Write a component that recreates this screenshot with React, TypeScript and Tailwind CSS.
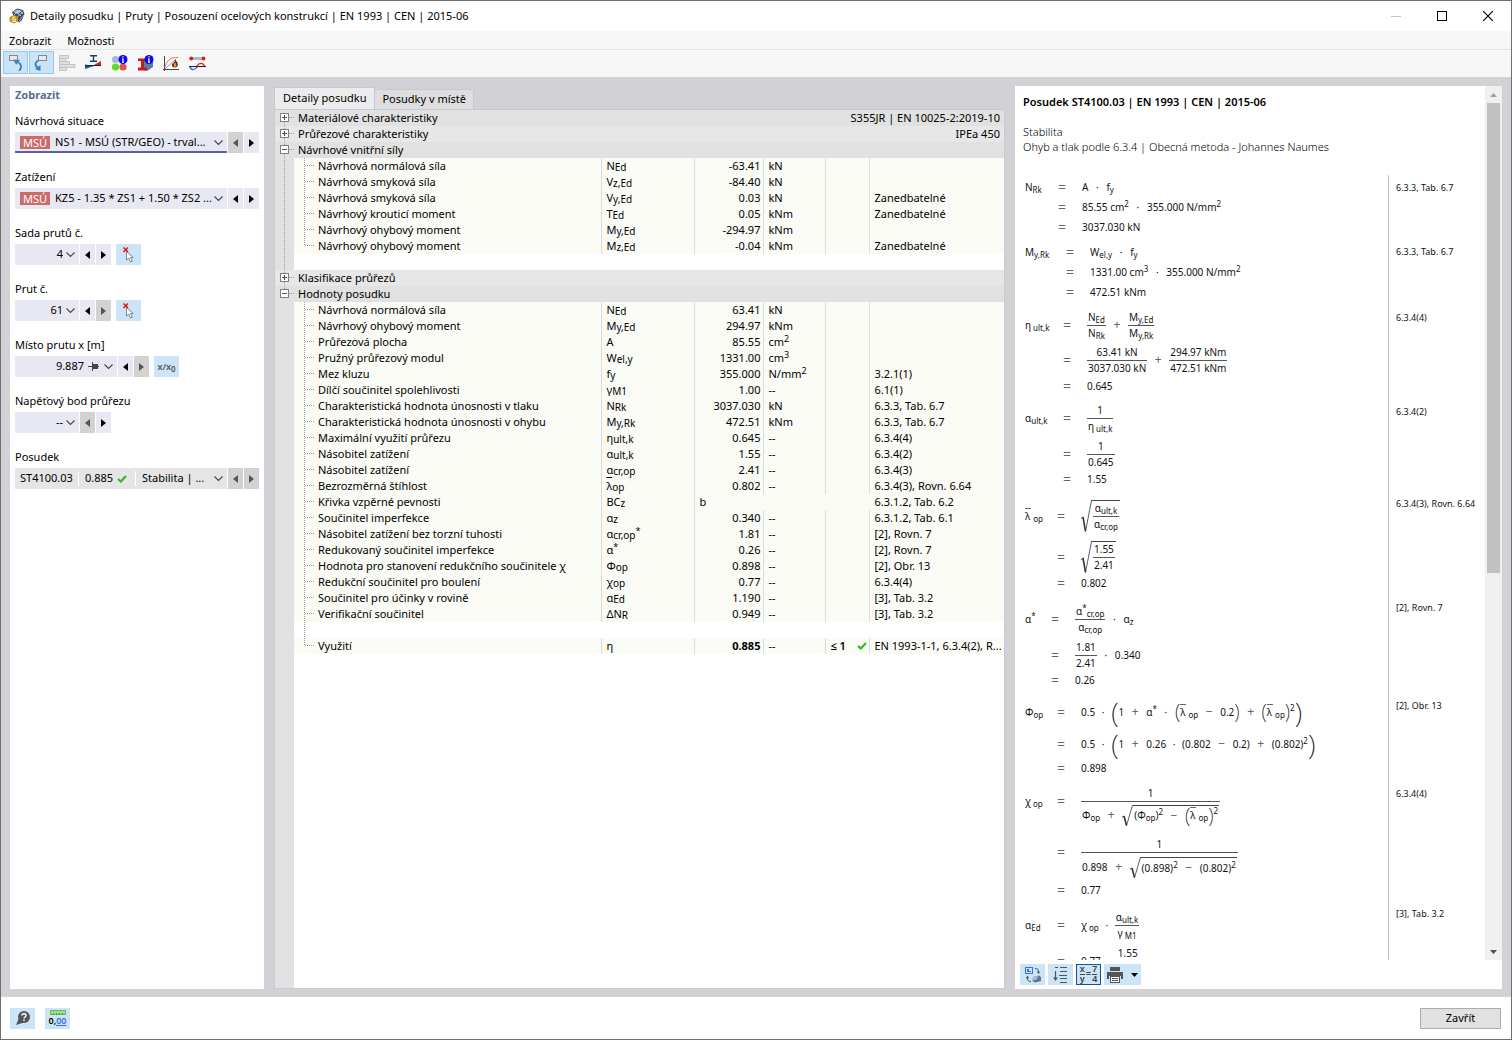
import type { ReactNode } from 'react';
import clsx from 'clsx';

/* ---------- small shared pieces ---------- */

function Sub({ children }: { children: ReactNode }) {
  return <sub className="text-[10px] leading-none bottom-[-1px]">{children}</sub>;
}

function Arrow({ dir }: { dir: 'left' | 'right' }) {
  return (
    <svg width="5" height="8" viewBox="0 0 5 8" aria-hidden="true">
      <path d={dir === 'left' ? 'M5 0V8L0 4Z' : 'M0 0V8L5 4Z'} fill="currentColor" />
    </svg>
  );
}

function Chevron() {
  return (
    <svg width="9" height="6" viewBox="0 0 9 6" fill="none" className="shrink-0" aria-hidden="true">
      <path d="M0.5 0.5L4.5 4.5L8.5 0.5" stroke="#444" strokeWidth="1.1" />
    </svg>
  );
}

function Check() {
  return (
    <svg width="10" height="8" viewBox="0 0 10 8" fill="none" aria-hidden="true">
      <path d="M1 4L3.8 6.5L9 1" stroke="#34b52c" strokeWidth="2.2" />
    </svg>
  );
}

/* ---------- left panel ---------- */

function Stepper({ name, prev = true, next = true }: { name: string; prev?: boolean; next?: boolean }) {
  const style = 'w-[15px] h-[21px] flex items-center justify-center';
  const on = 'bg-[#e8e8f2] text-black';
  const off = 'bg-[#d2d2d2] text-[#555]';
  return (
    <>
      <button type="button" disabled={!prev} aria-label={`${name} předchozí`} className={clsx(style, prev ? on : off)}>
        <Arrow dir="left" />
      </button>
      <button type="button" disabled={!next} aria-label={`${name} další`} className={clsx(style, next ? on : off)}>
        <Arrow dir="right" />
      </button>
    </>
  );
}

type FieldProps = {
  id: string;
  label: string;
  value: string;
  box: string;
  lead?: ReactNode;
  tail?: ReactNode;
  right?: boolean;
  prev?: boolean;
  next?: boolean;
  extra?: ReactNode;
};

function Field({ id, label, value, box, lead, tail, right, prev, next, extra }: FieldProps) {
  return (
    <div>
      <label htmlFor={id} className="flex items-center h-[22px]">
        {label}
      </label>
      <div className="flex gap-px">
        <div className={clsx('flex items-center h-[21px] pr-1', box)}>
          {lead}
          <select
            id={id}
            className={clsx('appearance-none flex-1 min-w-0 bg-transparent outline-none', right && 'text-right')}
          >
            <option>{value}</option>
          </select>
          {tail}
          <Chevron />
        </div>
        <Stepper name={label} prev={prev} next={next} />
        {extra}
      </div>
    </div>
  );
}

function Badge() {
  return <span className="bg-[#cd6a6a] text-white leading-[13px] px-[3px] ml-[5px] mr-[5px]">MSÚ</span>;
}

function PickButton({ label }: { label: string }) {
  return (
    <button type="button" aria-label={label} className="w-[25px] h-[21px] ml-1 bg-[#cce4f7] flex items-center justify-center">
      <svg width="14" height="16" viewBox="0 0 14 16" fill="none">
        <path d="M1.5 0.5L6 5M6 0.5L1.5 5" stroke="#e01818" strokeWidth="1.5" />
        <path d="M4.5 4.5V13L6.7 11L8.4 15L10.2 14.2L8.5 10.4H11.2Z" fill="#fff" stroke="#777" strokeWidth="0.9" />
      </svg>
    </button>
  );
}

function SidePanel() {
  return (
    <section className="w-[254px] shrink-0 bg-white px-[5px]">
      <h2 className="h-[18px] mb-[6px] leading-[18px] font-bold text-[#5c6b8f]">Zobrazit</h2>
      <div className="flex flex-col gap-[13px]">
        <Field
          id="situace"
          label="Návrhová situace"
          value="NS1 - MSÚ (STR/GEO) - trval..."
          box="w-[212px] bg-[#e8e8f2] shadow-[inset_0_-2px_0_#5e5fa8]"
          lead={<Badge />}
          prev={false}
        />
        <Field
          id="zatizeni"
          label="Zatížení"
          value="KZ5 - 1.35 * ZS1 + 1.50 * ZS2 ..."
          box="w-[212px] bg-[#e8e8f2]"
          lead={<Badge />}
        />
        <Field
          id="sada"
          label="Sada prutů č."
          value="4"
          box="w-[64px] bg-[#e8e8f2]"
          right
          tail={<span className="w-[3px]" />}
          extra={<PickButton label="Vybrat sadu prutů" />}
        />
        <Field
          id="prut"
          label="Prut č."
          value="61"
          box="w-[64px] bg-[#e8e8f2]"
          right
          next={false}
          tail={<span className="w-[3px]" />}
          extra={<PickButton label="Vybrat prut" />}
        />
        <Field
          id="misto"
          label="Místo prutu x [m]"
          value="9.887"
          box="w-[102px] bg-[#e8e8f2]"
          right
          next={false}
          tail={
            <svg width="11" height="9" viewBox="0 0 11 9" className="ml-1 mr-[5px]" aria-hidden="true">
              <path d="M0 4H4V0H5V2H10V4H11V5H10V7H5V9H4V5H0Z" fill="#444" />
            </svg>
          }
          extra={
            <button type="button" className="w-[25px] h-[21px] ml-1 bg-[#cce4f7] text-[9px] leading-[20px] font-semibold text-[#555]">
              x/x<sub className="text-[8px]">0</sub>
            </button>
          }
        />
        <Field
          id="bod"
          label="Napěťový bod průřezu"
          value="--"
          box="w-[64px] bg-[#e8e8f2]"
          right
          prev={false}
          tail={<span className="w-[3px]" />}
        />
        <Field
          id="posudek"
          label="Posudek"
          value="Stabilita | ..."
          box="w-[212px] bg-[#e5e5e5]"
          prev={false}
          next={false}
          lead={
            <>
              <span className="w-[63px] pl-[5px]">ST4100.03</span>
              <span className="w-[57px] h-[15px] flex items-center gap-1 pl-[6px] border-l border-white">
                0.885 <Check />
              </span>
              <span className="h-[15px] w-[7px] border-l border-white" />
            </>
          }
        />
      </div>
    </section>
  );
}

/* ---------- details table ---------- */

type Row = {
  name: string;
  sym: ReactNode;
  value: string;
  unit?: ReactNode;
  ref?: string;
  text?: boolean;
};

const forces: Row[] = [
  { name: 'Návrhová normálová síla', sym: <>N<Sub>Ed</Sub></>, value: '-63.41', unit: 'kN' },
  { name: 'Návrhová smyková síla', sym: <>V<Sub>z,Ed</Sub></>, value: '-84.40', unit: 'kN' },
  { name: 'Návrhová smyková síla', sym: <>V<Sub>y,Ed</Sub></>, value: '0.03', unit: 'kN', ref: 'Zanedbatelné' },
  { name: 'Návrhový krouticí moment', sym: <>T<Sub>Ed</Sub></>, value: '0.05', unit: 'kNm', ref: 'Zanedbatelné' },
  { name: 'Návrhový ohybový moment', sym: <>M<Sub>y,Ed</Sub></>, value: '-294.97', unit: 'kNm' },
  { name: 'Návrhový ohybový moment', sym: <>M<Sub>z,Ed</Sub></>, value: '-0.04', unit: 'kNm', ref: 'Zanedbatelné' },
];

const Sup = ({ children }: { children: ReactNode }) => <sup className="text-[9px] leading-none">{children}</sup>;

const checks: Row[] = [
  { name: 'Návrhová normálová síla', sym: <>N<Sub>Ed</Sub></>, value: '63.41', unit: 'kN' },
  { name: 'Návrhový ohybový moment', sym: <>M<Sub>y,Ed</Sub></>, value: '294.97', unit: 'kNm' },
  { name: 'Průřezová plocha', sym: 'A', value: '85.55', unit: <>cm<Sup>2</Sup></> },
  { name: 'Pružný průřezový modul', sym: <>W<Sub>el,y</Sub></>, value: '1331.00', unit: <>cm<Sup>3</Sup></> },
  { name: 'Mez kluzu', sym: <>f<Sub>y</Sub></>, value: '355.000', unit: <>N/mm<Sup>2</Sup></>, ref: '3.2.1(1)' },
  { name: 'Dílčí součinitel spolehlivosti', sym: <>γ<Sub>M1</Sub></>, value: '1.00', unit: '--', ref: '6.1(1)' },
  { name: 'Charakteristická hodnota únosnosti v tlaku', sym: <>N<Sub>Rk</Sub></>, value: '3037.030', unit: 'kN', ref: '6.3.3, Tab. 6.7' },
  { name: 'Charakteristická hodnota únosnosti v ohybu', sym: <>M<Sub>y,Rk</Sub></>, value: '472.51', unit: 'kNm', ref: '6.3.3, Tab. 6.7' },
  { name: 'Maximální využití průřezu', sym: <>η<Sub>ult,k</Sub></>, value: '0.645', unit: '--', ref: '6.3.4(4)' },
  { name: 'Násobitel zatížení', sym: <>α<Sub>ult,k</Sub></>, value: '1.55', unit: '--', ref: '6.3.4(2)' },
  { name: 'Násobitel zatížení', sym: <>α<Sub>cr,op</Sub></>, value: '2.41', unit: '--', ref: '6.3.4(3)' },
  { name: 'Bezrozměrná štíhlost', sym: <><span className="overline">λ</span><Sub>op</Sub></>, value: '0.802', unit: '--', ref: '6.3.4(3), Rovn. 6.64' },
  { name: 'Křivka vzpěrné pevnosti', sym: <>BC<Sub>z</Sub></>, value: 'b', ref: '6.3.1.2, Tab. 6.2', text: true },
  { name: 'Součinitel imperfekce', sym: <>α<Sub>z</Sub></>, value: '0.340', unit: '--', ref: '6.3.1.2, Tab. 6.1' },
  { name: 'Násobitel zatížení bez torzní tuhosti', sym: <>α<Sub>cr,op</Sub><Sup>*</Sup></>, value: '1.81', unit: '--', ref: '[2], Rovn. 7' },
  { name: 'Redukovaný součinitel imperfekce', sym: <>α<Sup>*</Sup></>, value: '0.26', unit: '--', ref: '[2], Rovn. 7' },
  { name: 'Hodnota pro stanovení redukčního součinitele χ', sym: <>Φ<Sub>op</Sub></>, value: '0.898', unit: '--', ref: '[2], Obr. 13' },
  { name: 'Redukční součinitel pro boulení', sym: <>χ<Sub>op</Sub></>, value: '0.77', unit: '--', ref: '6.3.4(4)' },
  { name: 'Součinitel pro účinky v rovině', sym: <>α<Sub>Ed</Sub></>, value: '1.190', unit: '--', ref: '[3], Tab. 3.2' },
  { name: 'Verifikační součinitel', sym: <>ΔN<Sub>R</Sub></>, value: '0.949', unit: '--', ref: '[3], Tab. 3.2' },
];

const DOTS = { stroke: '#a0a0a0', strokeWidth: 1, strokeDasharray: '1 1' };

// gutter cell: optional plus/minus box and the dotted line of the first level
function Gutter({ box, up, down }: { box?: 'plus' | 'minus'; up?: boolean; down?: boolean }) {
  return (
    <svg width="19" height="16" viewBox="0 0 19 16" fill="none" shapeRendering="crispEdges" className="block" aria-hidden="true">
      {up && <path d="M9.5 0V8" {...DOTS} />}
      {down && <path d="M9.5 8V16" {...DOTS} />}
      {box && (
        <>
          <path d="M14 7.5H19" {...DOTS} />
          <rect x="5.5" y="3.5" width="8" height="8" fill="#fff" stroke="#808080" />
          <path d={box === 'plus' ? 'M7 7.5H12M9.5 5V10' : 'M7 7.5H12'} stroke="#505050" />
        </>
      )}
    </svg>
  );
}

function Branch({ last }: { last?: boolean }) {
  return (
    <svg width="24" height="16" viewBox="0 0 24 16" fill="none" shapeRendering="crispEdges" className="shrink-0" aria-hidden="true">
      <path d={last ? 'M10.5 0V8' : 'M10.5 0V16'} {...DOTS} />
      <path d="M11 7.5H21" {...DOTS} />
    </svg>
  );
}

type GroupProps = { title: string; box: 'plus' | 'minus'; info?: string; light?: boolean; up?: boolean; down?: boolean };

function GroupRow({ title, box, info, light, up, down }: GroupProps) {
  return (
    <tr className={clsx('h-4', light ? 'bg-[#e7e7e7]' : 'bg-[#e1e1e1]')}>
      <td className="p-0">
        <Gutter box={box} up={up} down={down} />
      </td>
      <td colSpan={6} className="p-0">
        <div className="flex justify-between pl-1 pr-1">
          <span>{title}</span>
          <span>{info}</span>
        </div>
      </td>
    </tr>
  );
}

const cell = 'p-0 border-l border-[#dcdcdc] pl-1';

function DataRow({ row, line, last }: { row: Row; line?: boolean; last?: boolean }) {
  return (
    <tr className="h-4 bg-[#fafbf5]">
      <td className="p-0 bg-[#e1e1e1]">
        <Gutter up={line} down={line} />
      </td>
      <td className="p-0">
        <div className="flex h-4">
          <Branch last={last} />
          {row.name}
        </div>
      </td>
      <td className={cell}>{row.sym}</td>
      {row.text ? (
        <td colSpan={3} className={cell}>{row.value}</td>
      ) : (
        <>
          <td className={clsx(cell, 'text-right pr-[3px]')}>{row.value}</td>
          <td className={cell}>{row.unit}</td>
          <td className={cell} />
        </>
      )}
      <td className={clsx(cell, row.text && 'border-transparent')}>{row.ref}</td>
    </tr>
  );
}

function BlankRow({ line, branch }: { line?: boolean; branch?: boolean }) {
  return (
    <tr className="h-4">
      <td className="p-0 bg-[#e1e1e1]">
        <Gutter up={line} down={line} />
      </td>
      <td colSpan={6} className="p-0">
        {branch && (
          <svg width="24" height="16" viewBox="0 0 24 16" shapeRendering="crispEdges" className="block" aria-hidden="true">
            <path d="M10.5 0V16" {...DOTS} />
          </svg>
        )}
      </td>
    </tr>
  );
}

function DetailsPanel() {
  return (
    <section className="flex-1 min-w-0 flex flex-col">
      <div role="tablist" className="flex items-end h-[23px]">
        <button type="button" role="tab" aria-selected="true" className="h-[22px] px-2 bg-[#ececec] border border-b-0 border-[#c8c8d2]">
          Detaily posudku
        </button>
        <button type="button" role="tab" aria-selected="false" className="h-5 px-[7px] bg-[#dedede] border border-l-0 border-b-0 border-[#c8c8d2]">
          Posudky v místě
        </button>
      </div>
      <div className="flex-1 min-h-0 flex flex-col bg-white border border-[#c8c8d2]">
        <table className="w-full table-fixed border-collapse leading-4 whitespace-nowrap">
          <colgroup>
            <col className="w-[19px]" />
            <col />
            <col className="w-[93px]" />
            <col className="w-[69px]" />
            <col className="w-[62px]" />
            <col className="w-[44px]" />
            <col className="w-[134px]" />
          </colgroup>
          <tbody>
            <GroupRow title="Materiálové charakteristiky" box="plus" info="S355JR | EN 10025-2:2019-10" down />
            <GroupRow title="Průřezové charakteristiky" box="plus" info="IPEa 450" light up down />
            <GroupRow title="Návrhové vnitřní síly" box="minus" up down />
            {forces.map((row, i) => (
              <DataRow key={i} row={row} line last={i === forces.length - 1} />
            ))}
            <BlankRow line />
            <GroupRow title="Klasifikace průřezů" box="plus" light up down />
            <GroupRow title="Hodnoty posudku" box="minus" up />
            {checks.map((row, i) => (
              <DataRow key={i} row={row} />
            ))}
            <BlankRow branch />
            <tr className="h-4 bg-[#fafbf5]">
              <td className="p-0 bg-[#e1e1e1]" />
              <td className="p-0">
                <div className="flex h-4">
                  <Branch last />
                  Využití
                </div>
              </td>
              <td className={cell}>η</td>
              <td className={clsx(cell, 'text-right pr-[3px] font-bold')}>0.885</td>
              <td className={cell}>--</td>
              <td className={cell}>
                <div className="flex items-center justify-between pr-[2px] font-semibold">
                  ≤ 1 <Check />
                </div>
              </td>
              <td className={cell}>EN 1993-1-1, 6.3.4(2), R...</td>
            </tr>
          </tbody>
        </table>
        <div className="flex-1 w-[19px] bg-[#e1e1e1]" />
      </div>
    </section>
  );
}

/* ---------- formulas ---------- */

// variable with a subscript and an optional bar or star
function V({ b, s, bar, star, gap }: { b: string; s?: string; bar?: boolean; star?: boolean; gap?: boolean }) {
  return (
    <span className="whitespace-nowrap">
      <span className={clsx(bar && 'border-t border-[#666] pr-px')}>{b}</span>
      {star && <sup className="text-[8px] leading-none">*</sup>}
      {s && <sub className={clsx('text-[8px] leading-none', gap && 'ml-[2px]')}>{s}</sub>}
    </span>
  );
}

function Op({ children }: { children: ReactNode }) {
  return <span className="w-[22px] text-center text-[12px] leading-none text-[#666]">{children}</span>;
}

function Mul() {
  return <span className="w-[18px] text-center">·</span>;
}

function Dot() {
  return <span className="w-4 text-center">·</span>;
}

function Sq({ children }: { children: ReactNode }) {
  return (
    <span>
      {children}
      <sup className="text-[8px] leading-none">2</sup>
    </span>
  );
}

function Frac({ n, d }: { n: ReactNode; d: ReactNode }) {
  return (
    <span className="inline-grid grid-rows-[1fr_1px_1fr] justify-items-center">
      <span className="self-end flex items-center px-px leading-[15px]">{n}</span>
      <span className="w-full bg-[#555]" />
      <span className="flex items-center self-start px-px leading-[15px]">{d}</span>
    </span>
  );
}

function Root({ children }: { children: ReactNode }) {
  return (
    <span className="flex items-stretch">
      <svg width="11" viewBox="0 0 11 11" preserveAspectRatio="none" fill="none" className="h-auto self-stretch" aria-hidden="true">
        <path d="M0 6.5L2 5.8" stroke="#333" strokeWidth="1" vectorEffect="non-scaling-stroke" />
        <path d="M2 5.8L4.5 10.8" stroke="#333" strokeWidth="1.6" vectorEffect="non-scaling-stroke" />
        <path d="M4.5 10.8L10.6 0" stroke="#333" strokeWidth="0.8" vectorEffect="non-scaling-stroke" />
      </svg>
      <span className="flex items-center border-t border-[#444] px-px">{children}</span>
    </span>
  );
}

function Paren({ children, size = 'm' }: { children: ReactNode; size?: 'm' | 'l' }) {
  const glyph = clsx(
    'font-extralight',
    size === 'l' ? 'text-[28px] leading-[26px]' : 'text-[20px] leading-[20px]',
  );
  return (
    <span className="flex items-center">
      <span className={glyph}>(</span>
      {children}
      <span className={glyph}>)</span>
    </span>
  );
}

function Unit({ v, u, p }: { v: string; u: string; p?: string }) {
  return (
    <span className="whitespace-nowrap">
      {v} {u}
      {p && <sup className="text-[8px] leading-none">{p}</sup>}
    </span>
  );
}

const lambda = <V b="λ" s="op" bar gap />;

type Formula = {
  label: ReactNode;
  labelWidth: string;
  source: string;
  tall?: boolean;
  lines: { h: string; body: ReactNode }[];
};

const formulas: Formula[] = [
  {
    label: <V b="N" s="Rk" />,
    labelWidth: 'w-[33px]',
    source: '6.3.3, Tab. 6.7',
    lines: [
      { h: 'h-6', body: <>A<Mul /><V b="f" s="y" /></> },
      { h: 'h-4', body: <><Unit v="85.55" u="cm" p="2" /><Mul /><Unit v="355.000" u="N/mm" p="2" /></> },
      { h: 'h-6', body: <Unit v="3037.030" u="kN" /> },
    ],
  },
  {
    label: <V b="M" s="y,Rk" />,
    labelWidth: 'w-[41px]',
    source: '6.3.3, Tab. 6.7',
    lines: [
      { h: 'h-[26px]', body: <><V b="W" s="el,y" /><Mul /><V b="f" s="y" /></> },
      { h: 'h-[14px]', body: <><Unit v="1331.00" u="cm" p="3" /><Mul /><Unit v="355.000" u="N/mm" p="2" /></> },
      { h: 'h-[26px]', body: <Unit v="472.51" u="kNm" /> },
    ],
  },
  {
    label: <V b="η" s="ult,k" gap />,
    labelWidth: 'w-[38px]',
    source: '6.3.4(4)',
    lines: [
      {
        h: 'h-10',
        body: (
          <>
            <Frac n={<V b="N" s="Ed" />} d={<V b="N" s="Rk" />} />
            <Op>+</Op>
            <Frac n={<V b="M" s="y,Ed" />} d={<V b="M" s="y,Rk" />} />
          </>
        ),
      },
      { h: 'h-[30px]', body: <><Frac n="63.41 kN" d="3037.030 kN" /><Op>+</Op><Frac n="294.97 kNm" d="472.51 kNm" /></> },
      { h: 'h-[22px]', body: '0.645' },
    ],
  },
  {
    label: <V b="α" s="ult,k" />,
    labelWidth: 'w-[38px]',
    source: '6.3.4(2)',
    tall: true,
    lines: [
      { h: 'h-[42px]', body: <Frac n="1" d={<V b="η" s="ult,k" gap />} /> },
      { h: 'h-[30px]', body: <Frac n="1" d="0.645" /> },
      { h: 'h-5', body: '1.55' },
    ],
  },
  {
    label: lambda,
    labelWidth: 'w-8',
    source: '6.3.4(3), Rovn. 6.64',
    tall: true,
    lines: [
      { h: 'h-[54px]', body: <Root><Frac n={<V b="α" s="ult,k" />} d={<V b="α" s="cr,op" />} /></Root> },
      { h: 'h-7', body: <Root><Frac n="1.55" d="2.41" /></Root> },
      { h: 'h-6', body: '0.802' },
    ],
  },
  {
    label: <V b="α" star />,
    labelWidth: 'w-[26px]',
    source: '[2], Rovn. 7',
    lines: [
      { h: 'h-12', body: <><Frac n={<V b="α" s="cr,op" star />} d={<V b="α" s="cr,op" />} /><Mul /><V b="α" s="z" /></> },
      { h: 'h-6', body: <><Frac n="1.81" d="2.41" /><Mul />0.340</> },
      { h: 'h-[26px]', body: '0.26' },
    ],
  },
  {
    label: <V b="Φ" s="op" />,
    labelWidth: 'w-8',
    source: '[2], Obr. 13',
    lines: [
      {
        h: 'h-[38px]',
        body: (
          <>
            0.5<Dot />
            <Paren size="l">
              1<Op>+</Op><V b="α" star /><Mul />
              <Paren>{lambda}<Op>−</Op>0.2</Paren>
              <Op>+</Op>
              <Sq><span className="inline-flex align-middle"><Paren>{lambda}</Paren></span></Sq>
            </Paren>
          </>
        ),
      },
      {
        h: 'h-[26px]',
        body: (
          <>
            0.5<Dot />
            <Paren size="l">
              1<Op>+</Op>0.26<Dot />(0.802<Op>−</Op>0.2)<Op>+</Op><Sq>(0.802)</Sq>
            </Paren>
          </>
        ),
      },
      { h: 'h-[22px]', body: '0.898' },
    ],
  },
  {
    label: <V b="χ" s="op" gap />,
    labelWidth: 'w-8',
    source: '6.3.4(4)',
    tall: true,
    lines: [
      {
        h: 'h-11',
        body: (
          <Frac
            n="1"
            d={
              <span className="flex items-center pt-[3px]">
                <V b="Φ" s="op" /><Op>+</Op>
                <Root>
                  <Sq>(<V b="Φ" s="op" />)</Sq><Op>−</Op>
                  <Sq><span className="inline-flex align-middle"><Paren>{lambda}</Paren></span></Sq>
                </Root>
              </span>
            }
          />
        ),
      },
      {
        h: 'h-[58px]',
        body: (
          <Frac
            n="1"
            d={
              <span className="flex items-center pt-1 leading-5">
                0.898<Op>+</Op>
                <Root><Sq>(0.898)</Sq><Op>−</Op><Sq>(0.802)</Sq></Root>
              </span>
            }
          />
        ),
      },
      { h: 'h-[18px]', body: '0.77' },
    ],
  },
  {
    label: <V b="α" s="Ed" />,
    labelWidth: 'w-8',
    source: '[3], Tab. 3.2',
    tall: true,
    lines: [
      { h: 'h-[52px]', body: <><V b="χ" s="op" gap /><Dot /><Frac n={<V b="α" s="ult,k" />} d={<V b="γ" s="M1" gap />} /></> },
      { h: 'h-5', body: <>0.77<Dot /><Frac n="1.55" d="1.00" /></> },
    ],
  },
];

function FormulaBlock({ formula }: { formula: Formula }) {
  return (
    <div className="flex">
      <div className="flex-1 border-r border-[#c4c4c4] pl-[2px] text-[10px] text-[#111]">
        {formula.lines.map((line, i) => (
          <div key={i} className={clsx('flex items-center', line.h)}>
            <span className={clsx('shrink-0', formula.labelWidth)}>{i === 0 && formula.label}</span>
            <span className="w-6 shrink-0 text-[14px] leading-none text-[#666]">=</span>
            {line.body}
          </div>
        ))}
      </div>
      <div
        className={clsx(
          'w-24 pl-[7px] text-[9px] leading-3 whitespace-nowrap text-[#111]',
          formula.tall ? 'pt-[9px]' : 'pt-[7px]',
        )}
      >
        {formula.source}
      </div>
    </div>
  );
}

function FormulaPanel() {
  const tool = 'w-[25px] h-[21px] bg-[#cce4f7] flex items-center justify-center';
  return (
    <section className="w-[487px] shrink-0 bg-white flex flex-col">
      <div className="flex-1 min-h-0 flex">
        <div className="flex-1 min-w-0 pl-2 overflow-hidden">
          <h2 className="h-8 leading-8 font-semibold">Posudek ST4100.03 | EN 1993 | CEN | 2015-06</h2>
          <p className="pt-[6px] pb-[21px] leading-[15px] font-light">
            Stabilita
            <br />
            Ohyb a tlak podle 6.3.4 | Obecná metoda - Johannes Naumes
          </p>
          {formulas.map((formula, i) => (
            <FormulaBlock key={i} formula={formula} />
          ))}
        </div>
        <div className="w-[17px] bg-[#f0f0f0] flex flex-col">
          <button type="button" aria-label="Nahoru" className="h-[17px] flex items-center justify-center">
            <svg width="7" height="4" viewBox="0 0 7 4"><path d="M0 4L3.5 0L7 4Z" fill="#a0a0a0" /></svg>
          </button>
          <div className="flex-1 px-[2px]">
            <div className="h-[56%] bg-[#c1c1c1]" />
          </div>
          <button type="button" aria-label="Dolů" className="h-[17px] flex items-center justify-center">
            <svg width="7" height="4" viewBox="0 0 7 4"><path d="M0 0L3.5 4L7 0Z" fill="#505050" /></svg>
          </button>
        </div>
      </div>
      <div className="flex gap-[3px] pl-[5px] pt-1 pb-1">
        <button type="button" aria-label="Přepnout zobrazení" className={tool}>
          <svg width="16" height="16" viewBox="0 0 16 16" fill="none">
            <rect x="0.5" y="0.5" width="7" height="6" fill="#cfe0ff" stroke="#3f6fd8" />
            <path d="M2 2H4V4H6V5H2Z" fill="#3f6fd8" />
            <path d="M10 1.5C13 1.5 14 3 13.5 6" stroke="#555" />
            <path d="M11.8 4.5L13.5 7L15.2 4.8Z" fill="#555" />
            <path d="M6 14.5C3 14.5 2 13 2.4 10" stroke="#555" />
            <path d="M0.8 11.2L2.5 8.5L4.2 11.2Z" fill="#555" />
            <path d="M8 10L14 8.5L16 10V14L10 15.5L7.5 14Z" fill="#5a7696" />
            <path d="M8 10L13 9L12 12.5L7.5 13.5Z" fill="#a9bdd3" />
          </svg>
        </button>
        <button type="button" aria-label="Seřadit" className={tool}>
          <svg width="15" height="16" viewBox="0 0 15 16" fill="none" stroke="#555">
            <path d="M2 0.5H5M7 0.5H14M7 4.5H14M6 8.5H14M7 11.5H14M7 15.5H14" />
            <path d="M2.5 4V12" strokeWidth="1.2" />
            <path d="M0 10.5H5L2.5 14Z" fill="#555" stroke="none" />
          </svg>
        </button>
        <button
          type="button"
          aria-label="Vzorce s hodnotami"
          className="w-[25px] h-[21px] bg-[#cce4f7] border border-[#0b559f] flex items-center justify-center gap-px text-[9px] leading-[9px] font-bold text-[#444] font-['Liberation_Sans',sans-serif]"
        >
          <span className="flex flex-col divide-y divide-[#444]"><span>x</span><span>y</span></span>
          =
          <span className="flex flex-col divide-y divide-[#444]"><span>7</span><span>4</span></span>
        </button>
        <button type="button" aria-label="Tisk" className="w-[37px] h-[21px] bg-[#cce4f7] flex items-center justify-center gap-2">
          <svg width="16" height="16" viewBox="0 0 16 16">
            <path d="M3 0H13V4H3Z" fill="#555" />
            <path d="M0 5H16V12H14V9H2V12H0Z" fill="#555" />
            <rect x="3.5" y="9.5" width="9" height="6" fill="#fff" stroke="#555" />
            <path d="M5 11.5H11M5 13.5H11" stroke="#555" />
          </svg>
          <svg width="7" height="4" viewBox="0 0 7 4"><path d="M0 0L3.5 4L7 0Z" fill="#000" /></svg>
        </button>
      </div>
    </section>
  );
}

/* ---------- window chrome ---------- */

function InfoDot() {
  return (
    <>
      <circle cx="12" cy="4.5" r="4.5" fill="#0a0af0" />
      <path d="M12 1.2V2.6M12 3.6V7.2M11 4H12M11 7.2H13" stroke="#fff" strokeWidth="1.2" />
    </>
  );
}

const tools = [
  {
    label: 'Předchozí pohled',
    active: true,
    icon: (
      <>
        <rect x="2.5" y="0.5" width="8" height="5" fill="#e8e8e8" stroke="#888" />
        <path d="M12 16C15.5 12 14.5 8.5 9.5 6.5" stroke="#3f7fb5" strokeWidth="1.8" fill="none" />
        <path d="M6.5 4.5L13 5L9 10Z" fill="#3f7fb5" />
      </>
    ),
  },
  {
    label: 'Další pohled',
    active: true,
    icon: (
      <>
        <rect x="5.5" y="0.5" width="8" height="5" fill="#e8e8e8" stroke="#888" />
        <path d="M6 5C2 7 1 10 5 13" stroke="#3f7fb5" strokeWidth="1.8" fill="none" />
        <path d="M2 14L7.5 10L7.5 16Z" fill="#3f7fb5" />
      </>
    ),
  },
  {
    label: 'Vodorovné pruhy',
    icon: (
      <path
        d="M0.5 0.5H9.5V3.5H0.5ZM0.5 3.5H6.5V6.5H0.5ZM0.5 6.5H10.5V9.5H0.5ZM0.5 9.5H16V12.5H0.5ZM0.5 12.5H7.5V15.5H0.5Z"
        fill="#dedede"
        stroke="#c4c4c4"
      />
    ),
  },
  {
    label: 'Průběh na průřezu',
    icon: (
      <>
        <path d="M5 0.7H12M8.5 1V6M5 6.3H12" stroke="#1c3f66" strokeWidth="1.4" />
        <path d="M0 9.5V14L9 11Z" fill="#1f4fb0" />
        <path d="M16 6V10.5L7 11Z" fill="#d8281c" />
        <path d="M0 10.5H16" stroke="#222" />
      </>
    ),
  },
  {
    label: 'Informace o materiálu',
    icon: (
      <>
        <circle cx="4.5" cy="4.5" r="3.6" fill="#a7b4e8" />
        <circle cx="4.5" cy="12" r="3.6" fill="#5fdc28" />
        <circle cx="12" cy="12" r="3.6" fill="#e25050" />
        <InfoDot />
      </>
    ),
  },
  {
    label: 'Informace o průřezu',
    icon: (
      <>
        <path d="M7 4L16 2V12L11 15.5H7Z" fill="#5b7cab" />
        <path d="M1 3.5H10V6H7V12.5H10V15.5H1V12.5H4V6H1Z" fill="#c41c1c" />
        <InfoDot />
      </>
    ),
  },
  {
    label: 'Diagram požáru',
    icon: (
      <>
        <path d="M1.5 1V16M0 14.5H16" stroke="#444" strokeWidth="1" />
        <path d="M2 12C4 5 8 2 15 2.5" stroke="#ef6a6a" fill="none" />
        <path d="M2 14L13 4" stroke="#7d9bd8" fill="none" />
        <path d="M12 4.5C14.5 7.5 15.5 9 14.5 11C13.5 13 9.5 13 9 10.5C8.5 8.5 12 8 12 4.5Z" fill="#6b1a10" />
        <path d="M12 7C13.8 9.5 13.8 11.8 12 11.8C10 11.8 10.5 9.5 12 7Z" fill="#ff8a1c" />
      </>
    ),
  },
  {
    label: 'Průběh na prutu',
    icon: (
      <>
        <path d="M2 3.5H14" stroke="#a9bccd" strokeWidth="3" />
        <circle cx="2.2" cy="3.5" r="1.9" fill="#e01c1c" />
        <circle cx="14.5" cy="3.5" r="1.9" fill="#e01c1c" />
        <path d="M0 11.5H17" stroke="#222" />
        <path d="M1 12C2 15.5 6 15.5 8 12" stroke="#3d5ff0" strokeWidth="1.4" fill="none" />
        <path d="M8 11C10 7.5 14 7.5 15.5 11" stroke="#e01c1c" strokeWidth="1.4" fill="none" />
      </>
    ),
  },
];

function TitleBar() {
  const button = 'w-[46px] h-[30px] flex items-center justify-center';
  return (
    <header className="h-[30px] bg-white flex items-center">
      <svg width="16" height="16" viewBox="0 0 16 16" className="ml-2 mr-[5px]" aria-hidden="true">
        <path d="M3 4L8 0.5L14 2L15.5 6L13 12L10 14.5L5 9Z" fill="#3c4d68" />
        <path d="M4 4L8.5 1.5L13 3L9 6Z" fill="#a9b9cf" />
        <path d="M5 7L9 3M8 9L14 4M10 13L15 7M6 3L12 8M10 2L14 6" stroke="#d6dfea" strokeWidth="0.7" />
        <path d="M0.5 9L5 7L9 9.5V13.5L5 15.5L0.5 13.5Z" fill="#c8961e" />
        <path d="M6.5 9H4V13.5H6.5V11.2H4" stroke="#fff0b0" fill="none" />
      </svg>
      <h1 className="flex-1">
        Detaily posudku | Pruty | Posouzení ocelových konstrukcí | EN 1993 | CEN | 2015-06
      </h1>
      <button type="button" aria-label="Minimalizovat" className={button}>
        <svg width="10" height="10" viewBox="0 0 10 10"><path d="M0 5.5H10" stroke="#c4c4c4" /></svg>
      </button>
      <button type="button" aria-label="Maximalizovat" className={button}>
        <svg width="10" height="10" viewBox="0 0 10 10"><rect x="0.5" y="0.5" width="9" height="9" fill="none" stroke="#000" /></svg>
      </button>
      <button type="button" aria-label="Zavřít okno" className={button}>
        <svg width="10" height="10" viewBox="0 0 10 10"><path d="M0 0L10 10M10 0L0 10" stroke="#000" strokeWidth="1.2" /></svg>
      </button>
    </header>
  );
}

export default function App() {
  return (
    <div className="h-screen flex flex-col overflow-hidden border border-[#707070] bg-white text-black text-[11px] font-['Noto_Sans','Open_Sans',sans-serif]">
      <TitleBar />

      <nav className="h-[18px] bg-[#f7f7f7] flex items-center gap-4 pl-2 pt-[2px]">
        <button type="button">Zobrazit</button>
        <button type="button">Možnosti</button>
      </nav>

      <div className="h-7 bg-[#f7f7f7] border-t border-[#e3e3e3] flex items-start pt-px gap-px pl-[2px]">
        {tools.map((tool) => (
          <button
            key={tool.label}
            type="button"
            aria-label={tool.label}
            className={clsx(
              'w-[25px] h-[23px] flex items-center justify-center border',
              tool.active ? 'bg-[#c9e3f8] border-[#90c8f6]' : 'border-transparent',
            )}
          >
            <svg width="17" height="16" viewBox="0 0 17 16" fill="none" className="shrink-0">
              {tool.icon}
            </svg>
          </button>
        ))}
      </div>

      <main className="flex-1 min-h-0 bg-[#d2d1d6] flex gap-[10px] px-[9px] pt-[9px] pb-2">
        <SidePanel />
        <DetailsPanel />
        <FormulaPanel />
      </main>

      <footer className="h-[42px] bg-white flex items-center justify-between pl-[9px] pr-[10px]">
        <div className="flex gap-[10px]">
          <button type="button" aria-label="Nápověda" className="w-[25px] h-[21px] bg-[#cce4f7] flex items-center justify-center">
            <svg width="14" height="14" viewBox="0 0 14 14">
              <circle cx="8" cy="6" r="6" fill="#555" />
              <path d="M3 7L0 14L8 11.5Z" fill="#555" />
              <path d="M6 4.5C6 2.2 10 2.2 10 4.5C10 6 8 6 8 7.5M8 8.6V10" stroke="#fff" strokeWidth="1.4" fill="none" />
            </svg>
          </button>
          <button
            type="button"
            aria-label="Jednotky a desetinná místa"
            className="w-[25px] h-[21px] bg-[#cce4f7] flex flex-col items-center justify-center"
          >
            <svg width="16" height="5" viewBox="0 0 16 5">
              <rect x="0.5" y="0.5" width="15" height="4" fill="#9be089" stroke="#6cb65c" />
              <path d="M3.5 3V5M6.5 3V5M9.5 3V5M12.5 3V5" stroke="#4f9a40" />
            </svg>
            <span className="text-[9px] leading-[11px] font-semibold">
              0,<span className="text-[#3f6fd8] underline">00</span>
            </span>
          </button>
        </div>
        <button type="button" className="w-[81px] h-[21px] bg-[#e1e1e1] border border-[#adadad]">
          Zavřít
        </button>
      </footer>
    </div>
  );
}
